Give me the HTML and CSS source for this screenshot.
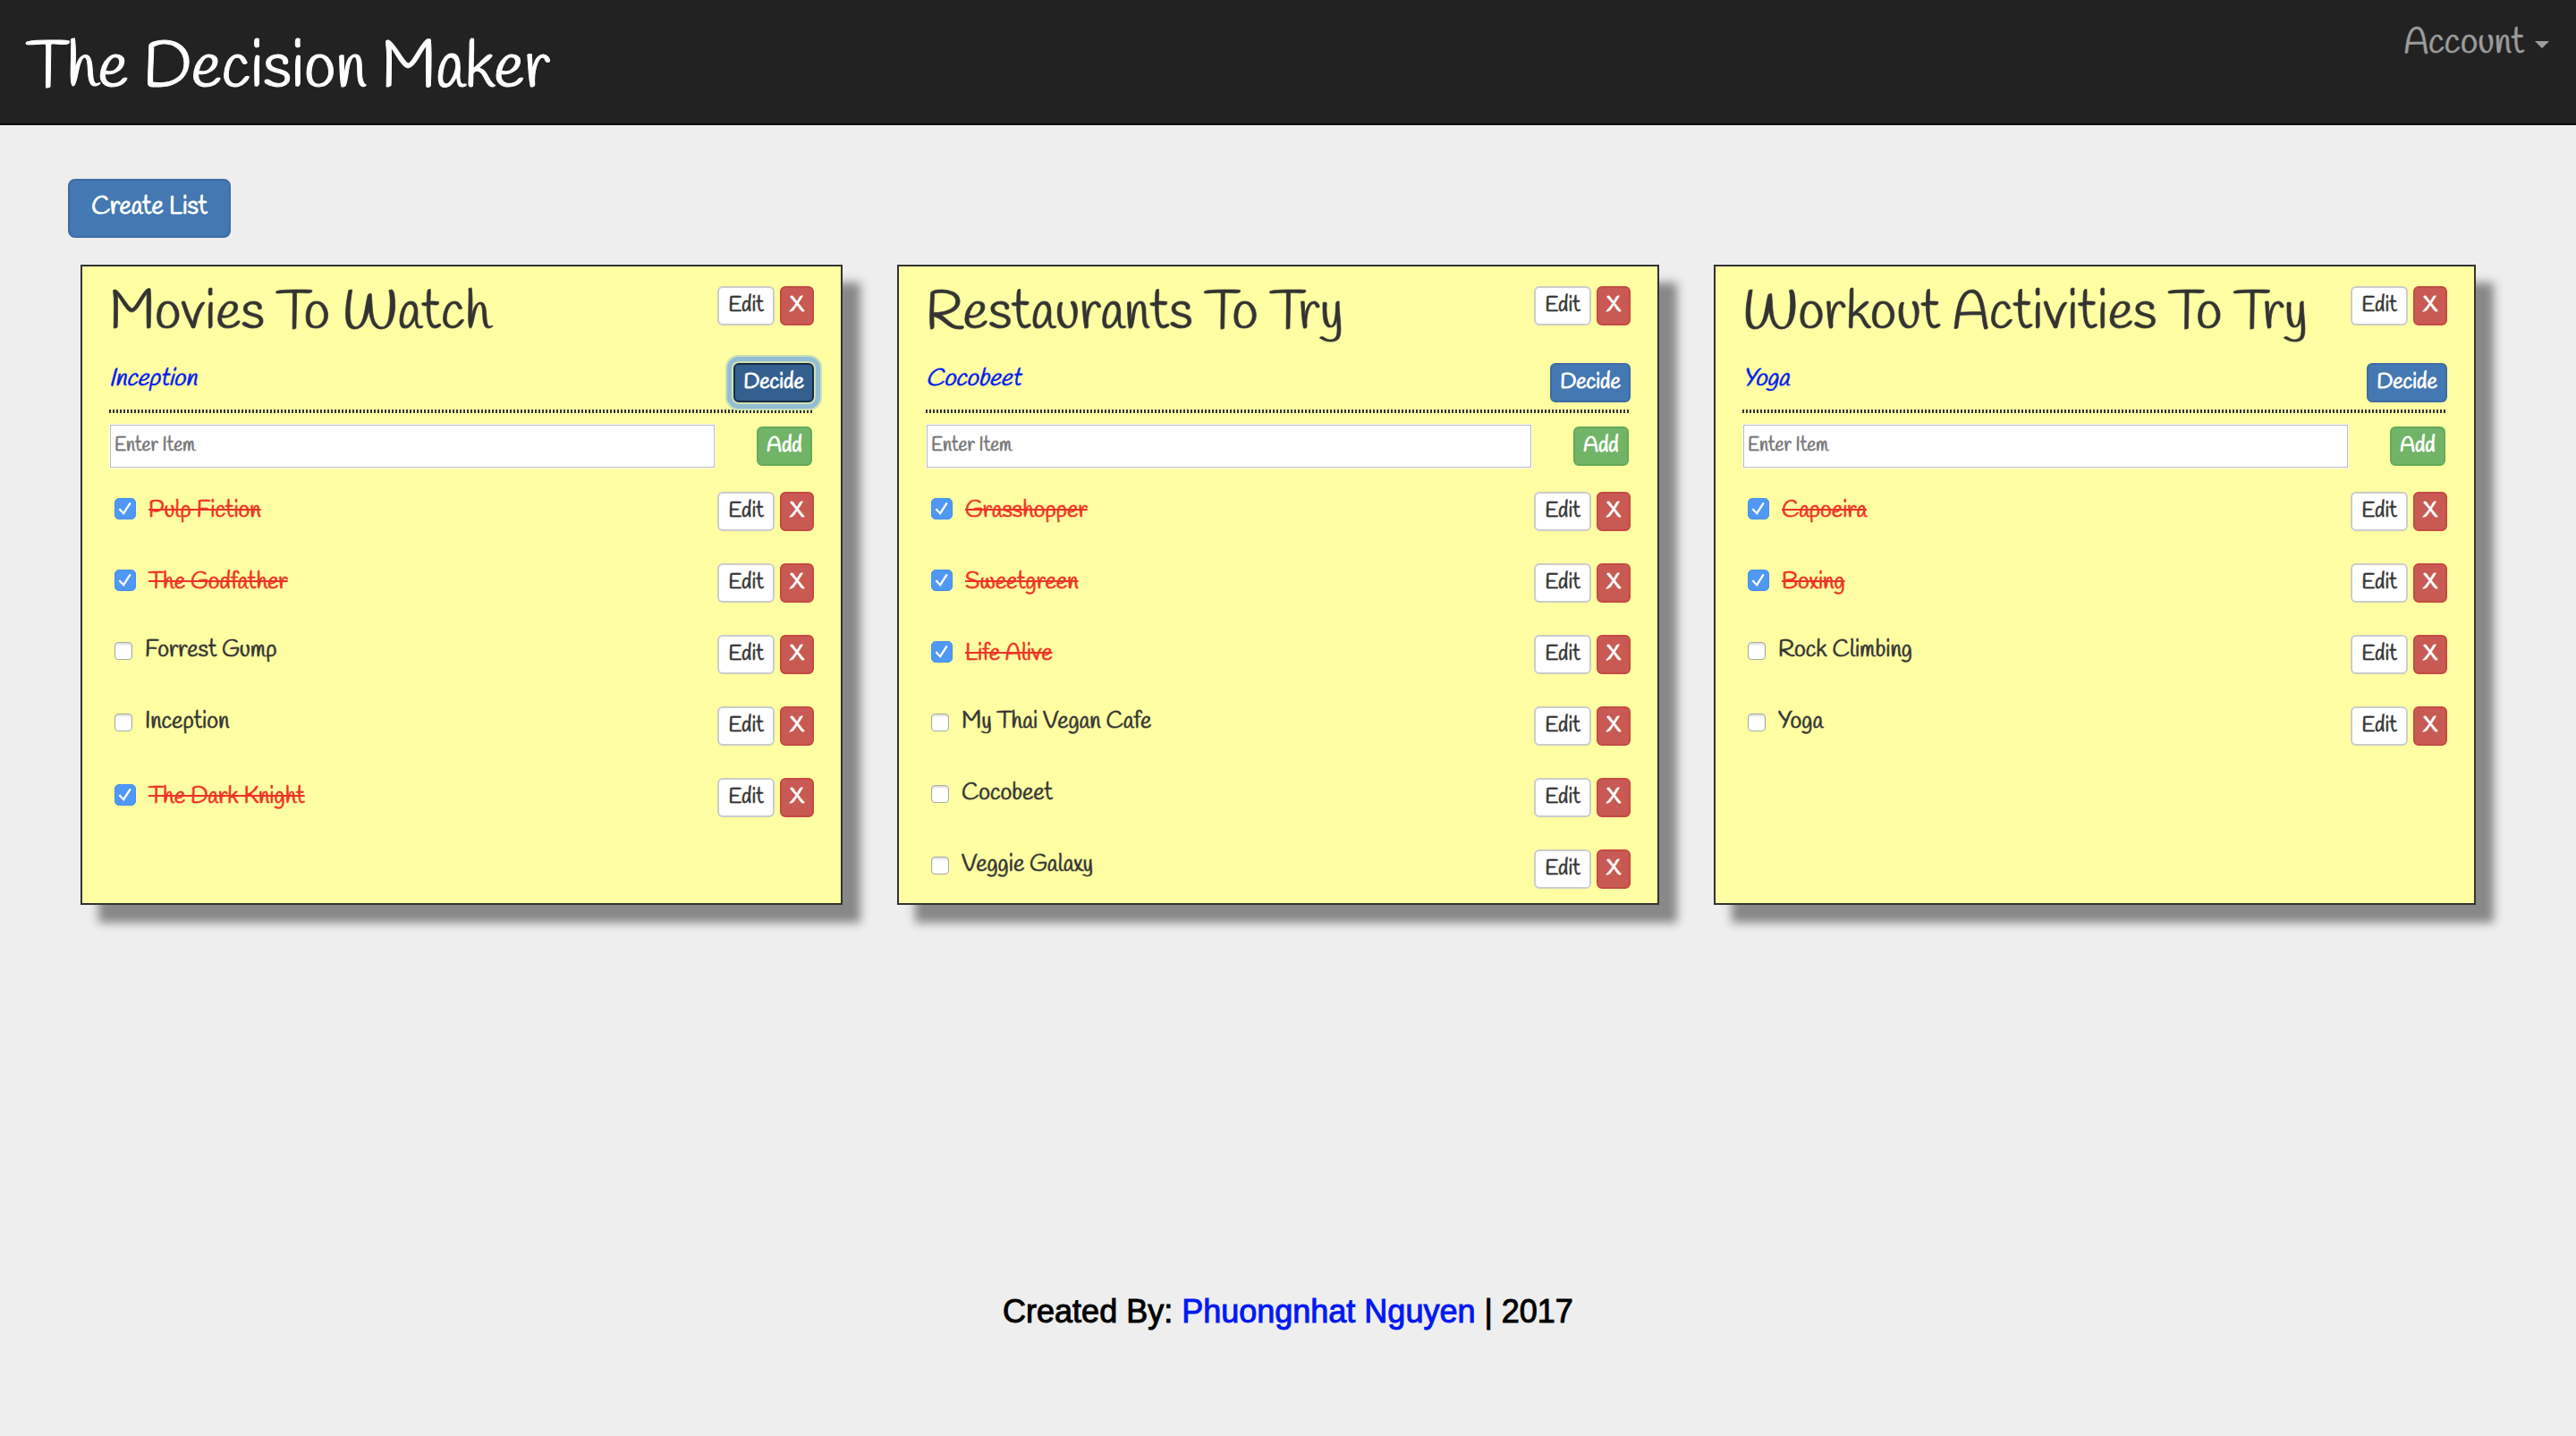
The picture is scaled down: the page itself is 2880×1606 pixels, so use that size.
FILE: index.html
```html
<!DOCTYPE html>
<html lang="en">
<head>
<meta charset="utf-8">
<title>The Decision Maker</title>
<link rel="stylesheet" href="styles.css">
</head>
<body>
<nav class="navbar">
  <a class="brand" href="#">The Decision Maker</a>
  <button class="account" type="button">Account<span class="caret"></span></button>
</nav>
<main class="main">
  <button class="btn btn-primary btn-create" type="button">Create List</button>
  <div class="lists">
    <section class="card">
      <header class="card-head"><h2 class="card-title">Movies To Watch</h2><div class="actions"><button class="btn btn-default" type="button">Edit</button><button class="btn btn-danger" type="button">X</button></div></header>
      <div class="decision"><em class="choice">Inception</em><button class="btn btn-primary btn-decide is-focused" type="button">Decide</button></div>
      <form class="add"><input class="add-input" type="text" placeholder="Enter Item" aria-label="New movie"><button class="btn btn-success" type="button">Add</button></form>
      <ul class="items">
        <li class="item done"><label class="item-label"><input class="check" type="checkbox" checked>Pulp Fiction</label><div class="actions"><button class="btn btn-default" type="button">Edit</button><button class="btn btn-danger" type="button">X</button></div></li>
        <li class="item done"><label class="item-label"><input class="check" type="checkbox" checked>The Godfather</label><div class="actions"><button class="btn btn-default" type="button">Edit</button><button class="btn btn-danger" type="button">X</button></div></li>
        <li class="item"><label class="item-label"><input class="check" type="checkbox">Forrest Gump</label><div class="actions"><button class="btn btn-default" type="button">Edit</button><button class="btn btn-danger" type="button">X</button></div></li>
        <li class="item"><label class="item-label"><input class="check" type="checkbox">Inception</label><div class="actions"><button class="btn btn-default" type="button">Edit</button><button class="btn btn-danger" type="button">X</button></div></li>
        <li class="item done"><label class="item-label"><input class="check" type="checkbox" checked>The Dark Knight</label><div class="actions"><button class="btn btn-default" type="button">Edit</button><button class="btn btn-danger" type="button">X</button></div></li>
      </ul>
    </section>
    <section class="card">
      <header class="card-head"><h2 class="card-title">Restaurants To Try</h2><div class="actions"><button class="btn btn-default" type="button">Edit</button><button class="btn btn-danger" type="button">X</button></div></header>
      <div class="decision"><em class="choice">Cocobeet</em><button class="btn btn-primary btn-decide" type="button">Decide</button></div>
      <form class="add"><input class="add-input" type="text" placeholder="Enter Item" aria-label="New restaurant"><button class="btn btn-success" type="button">Add</button></form>
      <ul class="items">
        <li class="item done"><label class="item-label"><input class="check" type="checkbox" checked>Grasshopper</label><div class="actions"><button class="btn btn-default" type="button">Edit</button><button class="btn btn-danger" type="button">X</button></div></li>
        <li class="item done"><label class="item-label"><input class="check" type="checkbox" checked>Sweetgreen</label><div class="actions"><button class="btn btn-default" type="button">Edit</button><button class="btn btn-danger" type="button">X</button></div></li>
        <li class="item done"><label class="item-label"><input class="check" type="checkbox" checked>Life Alive</label><div class="actions"><button class="btn btn-default" type="button">Edit</button><button class="btn btn-danger" type="button">X</button></div></li>
        <li class="item"><label class="item-label"><input class="check" type="checkbox">My Thai Vegan Cafe</label><div class="actions"><button class="btn btn-default" type="button">Edit</button><button class="btn btn-danger" type="button">X</button></div></li>
        <li class="item"><label class="item-label"><input class="check" type="checkbox">Cocobeet</label><div class="actions"><button class="btn btn-default" type="button">Edit</button><button class="btn btn-danger" type="button">X</button></div></li>
        <li class="item"><label class="item-label"><input class="check" type="checkbox">Veggie Galaxy</label><div class="actions"><button class="btn btn-default" type="button">Edit</button><button class="btn btn-danger" type="button">X</button></div></li>
      </ul>
    </section>
    <section class="card">
      <header class="card-head"><h2 class="card-title">Workout Activities To Try</h2><div class="actions"><button class="btn btn-default" type="button">Edit</button><button class="btn btn-danger" type="button">X</button></div></header>
      <div class="decision"><em class="choice">Yoga</em><button class="btn btn-primary btn-decide" type="button">Decide</button></div>
      <form class="add"><input class="add-input" type="text" placeholder="Enter Item" aria-label="New activity"><button class="btn btn-success" type="button">Add</button></form>
      <ul class="items">
        <li class="item done"><label class="item-label"><input class="check" type="checkbox" checked>Capoeira</label><div class="actions"><button class="btn btn-default" type="button">Edit</button><button class="btn btn-danger" type="button">X</button></div></li>
        <li class="item done"><label class="item-label"><input class="check" type="checkbox" checked>Boxing</label><div class="actions"><button class="btn btn-default" type="button">Edit</button><button class="btn btn-danger" type="button">X</button></div></li>
        <li class="item"><label class="item-label"><input class="check" type="checkbox">Rock Climbing</label><div class="actions"><button class="btn btn-default" type="button">Edit</button><button class="btn btn-danger" type="button">X</button></div></li>
        <li class="item"><label class="item-label"><input class="check" type="checkbox">Yoga</label><div class="actions"><button class="btn btn-default" type="button">Edit</button><button class="btn btn-danger" type="button">X</button></div></li>
      </ul>
    </section>
  </div>
</main>
<footer class="footer">Created By: <a class="footer-link" href="#">Phuongnhat Nguyen</a> | 2017</footer>
</body>
</html>
```
FILE: styles.css
```css
* {
  box-sizing: border-box;
  -webkit-text-stroke: 1px color-mix(in srgb, currentColor 70%, transparent);
}

body {
  display: flex;
  flex-direction: column;
  min-height: 100vh;
  margin: 0;
  background: #eee;
  color: #333;
  font-family: Handlee, Lato, sans-serif;
  font-size: 26px;
}

.navbar {
  display: flex;
  justify-content: space-between;
  align-items: flex-start;
  height: 140px;
  padding: 0 30px;
  background: #222;
  border-bottom: 2px solid #080808;
}
.brand {
  padding-top: 18px;
  color: #fff;
  font-size: 72px;
  line-height: 120px;
  text-decoration: none;
  -webkit-text-stroke: 1px;
}
.account {
  display: flex;
  align-items: center;
  gap: 12px;
  padding: 0;
  border: 0;
  background: none;
  color: #9d9d9d;
  font-family: inherit;
  font-size: 40px;
  line-height: 98px;
}
.caret {
  margin-top: 2px;
  border: 8px solid transparent;
  border-top-color: #9d9d9d;
  border-bottom: 0;
}

.main { padding: 60px 112px 0 90px; }

.btn {
  height: 44px;
  padding: 0;
  border: 2px solid;
  border-radius: 6px;
  font-family: inherit;
  font-size: 24px;
  line-height: 40px;
  text-align: center;
}
.btn-default { width: 64px; background: #fff; border-color: #ccc; color: #333; }
.btn-danger { width: 38px; background: #c95a53; border-color: #c54a43; color: #fff; -webkit-text-stroke: 1px; }
.btn-primary { background: #4478b2; border-color: #3c6ca4; color: #fff; -webkit-text-stroke: 1px; }
.btn-success { width: 62px; background: #72b467; border-color: #63ab58; color: #fff; -webkit-text-stroke: 1px; }
.btn-decide { width: 90px; }
.btn-decide.is-focused {
  background: #34608f;
  border-color: #172c46;
  box-shadow: 0 0 0 2px #cfe1b2, 0 0 0 7px #93bdd4, 0 0 0 9px #c9deb9;
}
.btn-create {
  display: block;
  width: 182px;
  height: 66px;
  margin: 0 0 30px -14px;
  padding: 6px 0 8px;
  border-radius: 8px;
  font-size: 28px;
  line-height: 48px;
}

.lists {
  display: grid;
  grid-template-columns: repeat(3, 1fr);
  gap: 61px;
}
.card {
  padding: 22px 30px 16px;
  background: #fffea2;
  border: 2px solid #333;
  box-shadow: 20px 20px 10px #888;
}
.card-head {
  display: flex;
  justify-content: space-between;
  align-items: flex-start;
  margin-bottom: 24px;
}
.card-title {
  margin: 0;
  font-size: 60px;
  font-weight: 400;
  line-height: 62px;
  white-space: nowrap;
}
.actions { display: flex; gap: 6px; }

.decision {
  display: flex;
  justify-content: space-between;
  align-items: flex-start;
  padding-bottom: 12px;
  background: repeating-linear-gradient(90deg, #333 0 2px, transparent 2px 4px) bottom / 100% 4px no-repeat;
}
.choice { color: #0018f5; font-size: 27px; line-height: 36px; }

.add {
  display: flex;
  justify-content: space-between;
  align-items: center;
  margin: 12px 0 26px;
  padding-right: 2px;
}
.add-input {
  width: 678px;
  height: 50px;
  padding: 0 4px 2px 5px;
  border: 1px solid #fff;
  outline: 1px solid #bbb;
  outline-offset: -2px;
  background: #fff;
  color: #333;
  font-family: inherit;
  font-size: 21px;
}
.add-input::placeholder { color: #757575; }

.items {
  display: grid;
  gap: 36px;
  margin: 0;
  padding: 0;
  list-style: none;
}
.item {
  display: flex;
  justify-content: space-between;
  align-items: flex-start;
  height: 44px;
}
.item-label {
  display: flex;
  align-items: flex-start;
  gap: 14px;
  padding: 0 6px;
  line-height: 34px;
}
.item.done .item-label {
  padding-top: 4px;
  color: #ee3223;
  text-decoration: line-through;
}
.check {
  display: grid;
  place-items: center;
  width: 20px;
  height: 20px;
  margin: 8px 0 0;
  appearance: none;
  background: #fff;
  border: 1px solid #aaa;
  border-radius: 4px;
  box-shadow: inset 0 2px 2px #ddd;
}
.check:checked {
  width: 24px;
  height: 24px;
  margin-top: 3px;
  background: #4f98f6;
  border-color: #4590f5;
  border-radius: 5px;
  box-shadow: none;
}
.check:checked::before {
  content: "";
  width: 16px;
  height: 16px;
  background: #fff;
  clip-path: polygon(4% 56%, 14% 46%, 36% 72%, 80% 4%, 92% 12%, 40% 94%);
}

.footer {
  margin-top: auto;
  padding-bottom: 119px;
  color: #000;
  font-family: "Liberation Sans", Arial, sans-serif;
  font-size: 36px;
  line-height: 40px;
  text-align: center;
  -webkit-text-stroke: 1px;
}
.footer-link { color: #0018f5; text-decoration: none; -webkit-text-stroke: 1px; }
```
